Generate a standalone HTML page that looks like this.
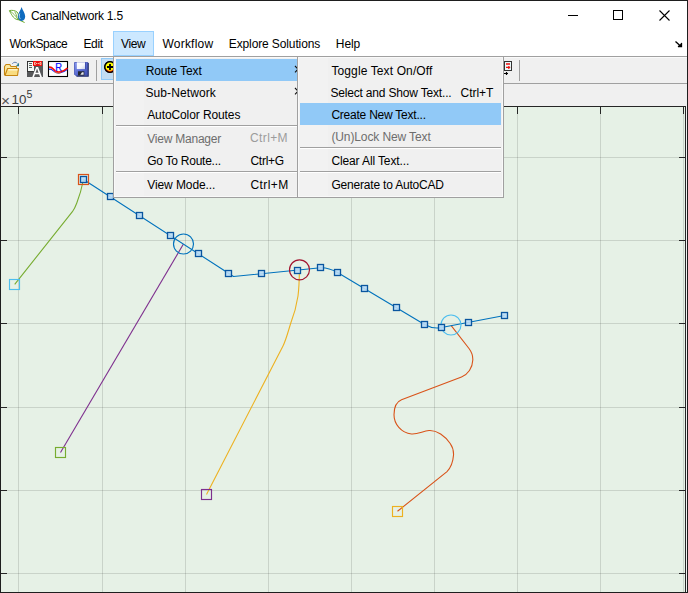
<!DOCTYPE html>
<html><head><meta charset="utf-8"><title>CanalNetwork 1.5</title>
<style>
html,body{margin:0;padding:0;}
body{width:688px;height:593px;overflow:hidden;background:#fff;position:relative;font-family:"Liberation Sans",sans-serif;font-size:12px;color:#000;}
.abs{position:absolute;}
.t{position:absolute;white-space:nowrap;line-height:14px;height:14px;}
#plot{position:absolute;left:0;top:0;}
.menu{position:absolute;background:#f0f0f0;border:1px solid #a0a0a0;box-shadow:inset 0 0 0 1px #f9f9f9;box-sizing:border-box;}
.hl{position:absolute;background:#91c9f7;}
.sep{position:absolute;height:1px;background:#a0a0a0;border-bottom:1px solid #fff;}
.dis{color:#6d6d6d;}
</style></head><body>
<!-- title bar + menu bar -->
<div class="abs" style="left:0;top:0;width:688px;height:56px;background:#fff"></div>
<!-- toolbar -->
<div class="abs" style="left:0;top:56px;width:688px;height:28px;background:#f0f0f0;border-top:1px solid #a0a0a0;border-bottom:1px solid #a0a0a0;box-sizing:border-box"></div>
<!-- figure bg -->
<div class="abs" style="left:0;top:84px;width:688px;height:509px;background:#f0f0f0"></div>

<svg id="plot" width="688" height="593" viewBox="0 0 688 593">
  <rect x="1" y="106" width="685" height="487" fill="#e6f1e6"/>
  <g stroke="#262626" stroke-opacity="0.15" stroke-width="1" shape-rendering="crispEdges" fill="none">
    <path d="M18.5 107V592M102.5 107V592M185.5 107V592M268.5 107V592M351.5 107V592M434.5 107V592M517.5 107V592M600.5 107V592M683.5 107V592"/>
    <path d="M1 157.5H685M1 240.5H685M1 323.5H685M1 407.5H685M1 490.5H685M1 573.5H685"/>
  </g>
  <g stroke="#262626" stroke-width="1" shape-rendering="crispEdges" fill="none">
    <path d="M1 106.500H686M685.500 106V593"/>
    <path d="M18.5 106V114M102.5 106V114M185.5 106V114M268.5 106V114M351.5 106V114M434.5 106V114M517.5 106V114M600.5 106V114M683.5 106V114"/>
    <path d="M1 157.5H7M1 240.5H7M1 323.5H7M1 407.5H7M1 490.5H7M1 573.5H7"/>
    <path d="M679 157.5H686M679 240.5H686M679 323.5H686M679 407.5H686M679 490.5H686M679 573.5H686"/>
  </g>
  <g fill="none" stroke-width="1.1" stroke-linejoin="round">
    <!-- green route -->
    <path d="M83.500 179.500C82 187 79.500 196 76.800 203C75.500 206.500 74 209.500 72.400 211.700L14.700 284.300" stroke="#77ac30"/>
    <!-- purple route -->
    <path d="M183.300 244.300L60.500 452.500" stroke="#7e2f8e"/>
    <!-- yellow route -->
    <path d="M299.400 270C299.300 280 299 288 298 296C296.500 306 293.500 316 290.800 323C288 332 286 340 283 346L206.500 494.500" stroke="#edb120"/>
    <!-- orange route -->
    <path d="M451 325.300L469 348.500C472 352.500 473 356 472.800 360C472.500 368 468 374.500 461.500 377L401.500 399.800C396 402 394 408 394 414.800C394 424 401 433 411.500 434C418 434.500 423 431 429 430.500C437 430 445 436 450.200 443.500C453 447.500 453.800 451 453.500 455.300C453 462 450.500 468 447 471.600L397.500 511.300" stroke="#d95319"/>
    <!-- blue main route -->
    <path d="M83.500 179.500L233.500 276.500L320.500 267.800C327 267.500 332 269.500 337.500 272.500L424.500 324.500C429 327 433 328 437 328C439 328 440.500 327.700 441.500 327.500L504.500 315.500" stroke="#0072bd" stroke-width="1.100"/>
  </g>
  <g fill="none" stroke-width="1.150">
    <circle cx="183.500" cy="244" r="10" stroke="#0072bd"/>
    <circle cx="299.500" cy="269.800" r="10" stroke="#a2142f"/>
    <circle cx="451" cy="325" r="10" stroke="#4dbeee"/>
    <rect x="78.500" y="174.500" width="10" height="10" stroke="#d95319" stroke-width="1.2"/>
    <rect x="9.500" y="279.500" width="10" height="10" stroke="#4dbeee"/>
    <rect x="55.500" y="447.500" width="10" height="10" stroke="#77ac30"/>
    <rect x="201.500" y="489.500" width="10" height="10" stroke="#7e2f8e"/>
    <rect x="392.500" y="506.500" width="10" height="10" stroke="#edb120"/>
  </g>
  <g fill="#b9dcf6" fill-opacity="0.9" stroke="#0a559f" stroke-width="1.300"><rect x="80.5" y="176.5" width="6" height="6"/><rect x="107.5" y="193.5" width="6" height="6"/><rect x="136.5" y="212.5" width="6" height="6"/><rect x="167.5" y="232.5" width="6" height="6"/><rect x="195.5" y="250.5" width="6" height="6"/><rect x="225.5" y="270.5" width="6" height="6"/><rect x="258.5" y="270.5" width="6" height="6"/><rect x="294.5" y="267.5" width="6" height="6"/><rect x="317.5" y="264.5" width="6" height="6"/><rect x="334.5" y="269.5" width="6" height="6"/><rect x="361.5" y="285.5" width="6" height="6"/><rect x="393.5" y="304.5" width="6" height="6"/><rect x="421.5" y="321.5" width="6" height="6"/><rect x="438.5" y="324.5" width="6" height="6"/><rect x="465.5" y="319.5" width="6" height="6"/><rect x="501.5" y="312.5" width="6" height="6"/></g>
</svg>

<!-- window border -->
<div class="abs" style="left:0;top:0;width:688px;height:1px;background:#1e1e1e"></div>
<div class="abs" style="left:0;top:0;width:1px;height:593px;background:#1e1e1e"></div>
<div class="abs" style="left:687px;top:0;width:1px;height:593px;background:#1e1e1e"></div>
<div class="abs" style="left:0;top:592px;width:688px;height:1px;background:#1e1e1e"></div>


<!-- window controls -->
<svg class="abs" style="left:560px;top:1px" width="127" height="54" viewBox="560 1 127 54">
  <path d="M568 15.500H578" stroke="#000" stroke-width="1" shape-rendering="crispEdges"/>
  <rect x="613.500" y="10.500" width="9" height="9" fill="none" stroke="#000" stroke-width="1" shape-rendering="crispEdges"/>
  <path d="M659.500 10.500L669.500 20.500M669.500 10.500L659.500 20.500" stroke="#000" stroke-width="1.1" fill="none"/>
  <path d="M675.500 41.500L681 46.500M681.500 43V46.500H678" stroke="#000" stroke-width="1.3" fill="none"/>
  <path d="M682 42.500V47H677.500Z" fill="#000"/>
</svg>

<!-- app icon -->
<svg class="abs" style="left:8px;top:6px" width="19" height="18" viewBox="8 6 19 18">
  <g transform="translate(0.5,0.5)"><path d="M8.900 10.100C11.500 9.500 14.500 9.900 16.500 11.500C17.900 12.700 18.300 15 17.700 19.300C14.600 18.900 13 17 11.800 15.200C11 14 10 12.500 8.900 10.100Z" fill="none" stroke="#6aaa2e" stroke-width="1"/>
  <path d="M9.300 10.400C12.500 12.500 15.500 15.500 17.500 19M14.300 11.300C15.300 13 16.200 14.800 16.700 16.800" fill="none" stroke="#6aaa2e" stroke-width="0.800"/></g>
  <path d="M17.600 19.300C20 20.500 22.500 21.500 24.600 22.500" fill="none" stroke="#6aaa2e" stroke-width="1"/>
  <path d="M21.600 7C22.300 10 25.200 13 25.200 16.500C25.200 19 23.600 20.900 21.600 20.900C19.600 20.900 18 19 18 16.500C18 13 20.900 10 21.600 7Z" fill="#0e6bbf"/>
  <path d="M19.700 13.500C19.100 15.500 19.200 17.500 20.300 18.800" fill="none" stroke="#dbeaf7" stroke-width="0.800"/>
</svg>

<!-- toolbar contents -->
<div class="abs" style="left:1px;top:57px;width:686px;height:1px;background:#fafafa"></div>
<div class="abs" style="left:96px;top:60px;width:1px;height:21px;background:#a0a0a0"></div>
<div class="abs" style="left:519px;top:60px;width:1px;height:21px;background:#a0a0a0"></div>
<div class="abs" style="left:101px;top:58px;width:24px;height:22px;background:#c2dcf2;border:1px solid #91c9f7;box-sizing:border-box"></div>
<svg class="abs" style="left:0;top:57px" width="530" height="26" viewBox="0 57 530 26">
  <!-- open folder -->
  <path d="M12.300 63.800C13.500 61.800 16.300 61.700 17.500 63.600" fill="none" stroke="#5f7fb0" stroke-width="1"/>
  <path d="M19 62.800V66.300H15.800Z" fill="#2a7f8f"/>
  <path d="M4.500 75V66.500L6 64.500H9.800L11 66.500H16.500V68.500" fill="#fbe9a0" stroke="#c68510" stroke-width="1.100" stroke-linejoin="round"/>
  <path d="M5 75.500L7.500 68.500H18.500L17.500 75.500Z" fill="#f9dc80" stroke="#c68510" stroke-width="1.100" stroke-linejoin="round"/>
  <path d="M8.300 69.800H17.500" stroke="#fff8d8" stroke-width="1.300"/>
  <!-- doc A icon -->
  <rect x="27" y="61" width="16" height="16" fill="#57585a"/>
  <rect x="27.500" y="61.500" width="5.500" height="10" fill="#f6faf8" stroke="#2a2a2a" stroke-width="0.900"/>
  <rect x="32" y="62" width="2" height="9" fill="#f6faf8"/>
  <path d="M29 63.500H32M29 65.500H32M29 67.500H32" stroke="#5d6360" stroke-width="1" shape-rendering="crispEdges"/>
  <rect x="33" y="61" width="9" height="5" fill="#f40d10"/>
  <path d="M35.700 62.500H34.500V64.600H35.700M39.700 62.500H40.900V64.600H39.700M35.800 63.550H39.600" stroke="#f4dcc0" stroke-width="0.900" fill="none"/>
  <path d="M37.500 61.500V65.500" stroke="#c41a1a" stroke-width="0.600"/>
  <path d="M32.300 77L36.100 66.900H38.100L41.900 77H40.100L39.100 74.200H35L34 77ZM35.500 72.700H38.600L37.050 68.500Z" fill="#fff"/>
  <!-- R curve icon -->
  <rect x="48.500" y="61.500" width="19" height="15" fill="#fff" stroke="#000" stroke-width="1.100"/>
  <path d="M49 69.300C50.500 69 51.800 69.400 53 70.600C55 72.500 57 73.200 59.500 73C62.500 72.700 65 71.300 67.500 69.300" fill="none" stroke="#1030ff" stroke-width="1.200"/>
  
  <path d="M49 67.200C51.500 66.500 52.500 68.300 54 69.800C55.500 71.300 57 72.200 59 72.100C62 71.900 64.500 70.800 67.500 68" fill="none" stroke="#fa0f0a" stroke-width="1.700"/>
  <path d="M54.500 71.800C56.500 73.200 58.500 73.300 60.500 72.900" fill="none" stroke="#f07828" stroke-width="0.900"/>
  <text x="55.300" y="70.700" font-family="Liberation Sans, sans-serif" font-size="10.400" fill="#1212ff" stroke="#1212ff" stroke-width="0.250" textLength="6.800" lengthAdjust="spacingAndGlyphs">R</text>
  <!-- floppy -->
  <defs><linearGradient id="fg" x1="0" y1="0" x2="1" y2="1"><stop offset="0" stop-color="#8c9cf0"/><stop offset="0.5" stop-color="#5a6cd2"/><stop offset="1" stop-color="#3d4cae"/></linearGradient>
  <linearGradient id="fl" x1="0" y1="0" x2="1" y2="1"><stop offset="0" stop-color="#ffffff"/><stop offset="0.6" stop-color="#f4f6fc"/><stop offset="1" stop-color="#c8d0ea"/></linearGradient></defs>
  <path d="M74.500 62.500H88V75.800H76L74.500 74.300Z" fill="url(#fg)" stroke="#4656b8" stroke-width="0.800"/>
  <path d="M88.200 63V76.200H76.500" fill="none" stroke="#2a356f" stroke-width="1.200"/>
  <rect x="76.800" y="62.300" width="8.200" height="6.800" fill="url(#fl)"/>
  <path d="M85.500 62.500V69.300" stroke="#3b4aa8" stroke-width="0.800"/>
  <rect x="78" y="71.300" width="6.300" height="4.200" fill="#23262f"/>
  <path d="M80.300 74.800L82 72.300H83.600V74.800Z" fill="#e6e9f4"/>
  <!-- zoom icon -->
  <circle cx="110" cy="67" r="5.300" fill="#ffff00" stroke="#000" stroke-width="1.200"/>
  <path d="M105.800 69.600Q110 73.800 114.200 69.600" fill="none" stroke="#ff2a00" stroke-width="1.800"/>
  <circle cx="110" cy="67" r="5.300" fill="none" stroke="#000" stroke-width="1.200"/>
  <path d="M107 67H113M110 64V70" stroke="#000" stroke-width="1.800"/>
  <!-- right icon -->
  <rect x="504.500" y="61.500" width="7" height="9" fill="#eafafa" stroke="#333" stroke-width="1"/>
  <path d="M506 64H510" stroke="#f01010" stroke-width="1.500" fill="none"/><path d="M506 67.300H510.200M508.800 66V69" stroke="#f01010" stroke-width="1.200" fill="none"/>
  <path d="M504 73.500H508M506.500 72V75" stroke="#000" stroke-width="1.200" fill="none"/>
</svg>

<!-- title -->
<span class="t" id="title" style="left:30.9px;letter-spacing:-0.21px;top:9px">CanalNetwork 1.5</span>

<!-- menubar -->
<div class="abs" style="left:113px;top:31px;width:41px;height:25px;background:#cce8ff;border:1px solid #99d1ff;box-sizing:border-box"></div>
<span class="t" id="m1" style="left:9.4px;letter-spacing:-0.44px;top:37px">WorkSpace</span>
<span class="t" id="m2" style="left:83.4px;letter-spacing:-0.3px;top:37px">Edit</span>
<span class="t" id="m3" style="left:121.0px;letter-spacing:-0.37px;top:37px">View</span>
<span class="t" id="m4" style="left:162.5px;letter-spacing:0.21px;top:37px">Workflow</span>
<span class="t" id="m5" style="left:228.8px;letter-spacing:-0.12px;top:37px">Explore Solutions</span>
<span class="t" id="m6" style="left:335.8px;letter-spacing:-0.07px;top:37px">Help</span>

<span class="t" id="exp" style="left:1.100px;top:93.500px;color:#555;font-size:15.500px">×</span><span class="t" id="exp2" style="left:11.500px;top:93px;color:#3a3a3a;font-size:13.330px">10</span><span class="t" id="exp3" style="left:26.400px;top:87px;color:#3a3a3a;font-size:10.600px">5</span>

<!-- menus -->
<div class="menu" style="left:113px;top:56px;width:187px;height:142px"></div><div class="abs" style="left:115px;top:58px;width:29px;height:138px;background:#f2f2f2"></div>
<div class="hl" style="left:116px;top:59px;width:181px;height:22px"></div>
<div class="sep" style="left:116px;top:125px;width:181px"></div>
<div class="sep" style="left:116px;top:171px;width:181px"></div>
<svg class="abs" style="left:292px;top:64px" width="8" height="34" viewBox="0 0 8 34"><path d="M3 2L6 5.200L3 8.400M3 24L6 27.200L3 30.400" fill="none" stroke="#111" stroke-width="1.100"/></svg>
<span class="t " id="v0" style="left:145.7px;letter-spacing:-0.12px;top:64px">Route Text</span>
<span class="t " id="v1" style="left:145.4px;letter-spacing:0.11px;top:86px">Sub-Network</span>
<span class="t " id="v2" style="left:147.2px;letter-spacing:-0.1px;top:108px">AutoColor Routes</span>
<span class="t dis" id="v3" style="left:147.2px;letter-spacing:-0.22px;top:132px">View Manager</span>
<span class="t " id="v4" style="left:147.2px;letter-spacing:-0.25px;top:154px">Go To Route...</span>
<span class="t " id="v5" style="left:147.2px;letter-spacing:-0.08px;top:178px">View Mode...</span>
<span class="t" id="vs0" style="left:250.0px;letter-spacing:0.38px;top:131px;color:#9c9c9c">Ctrl+M</span>
<span class="t" id="vs1" style="left:250.4px;letter-spacing:-0.24px;top:154px">Ctrl+G</span>
<span class="t" id="vs2" style="left:250.4px;letter-spacing:0.44px;top:178px">Ctrl+M</span>
<div class="menu" style="left:297px;top:56px;width:207px;height:142px"></div><div class="abs" style="left:299px;top:58px;width:29px;height:138px;background:#f2f2f2"></div>
<div class="hl" style="left:300px;top:103px;width:201px;height:22px"></div>
<div class="sep" style="left:300px;top:147px;width:201px"></div>
<div class="sep" style="left:300px;top:171px;width:201px"></div>
<span class="t " id="s0" style="left:331.4px;letter-spacing:0.12px;top:64px">Toggle Text On/Off</span>
<span class="t " id="s1" style="left:330.4px;letter-spacing:-0.18px;top:86px">Select and Show Text...</span>
<span class="t " id="s2" style="left:331.4px;letter-spacing:-0.23px;top:108px">Create New Text...</span>
<span class="t dis" id="s3" style="left:331.4px;letter-spacing:-0.11px;top:130px">(Un)Lock New Text</span>
<span class="t " id="s4" style="left:331.4px;letter-spacing:-0.12px;top:154px">Clear All Text...</span>
<span class="t " id="s5" style="left:331.4px;letter-spacing:-0.19px;top:178px">Generate to AutoCAD</span>
<span class="t" id="ss0" style="left:460.6px;letter-spacing:-0.04px;top:86px">Ctrl+T</span>
</body></html>
